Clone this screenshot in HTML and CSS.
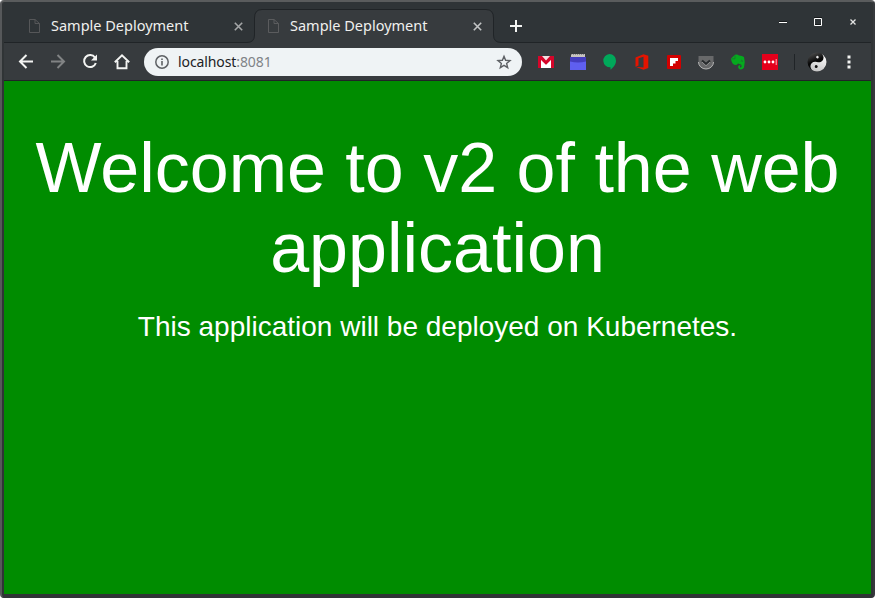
FILE: index.html
```html
<!DOCTYPE html>
<html lang="en">
<head>
<meta charset="utf-8">
<title>Sample Deployment</title>
<link rel="stylesheet" href="styles.css">
</head>
<body>
<div class="window">
  <header class="tabs">
    <svg class="tab-shape" width="867" height="41" viewBox="0 0 867 41"><path d="M0 40.5H243Q250.500 40.500 250.500 33V16Q250.500 7.500 258 7.500H482Q489.500 7.500 489.500 16V33Q489.500 40.500 497 40.500H867V42H0Z" fill="#373b3e" stroke="#202427"/></svg>
    <div class="tab">
      <svg class="page-icon" width="12" height="14" viewBox="0 0 12 14"><path d="M1.500.5H7L11.500 4.500V13.500H1.500ZM7 .5V4.500H11.500" fill="none" stroke="#565759"/></svg>
      <span class="tab-title">Sample Deployment</span>
      <svg class="close" width="9" height="9" viewBox="0 0 9 9"><path d="M.8.8 8.200 8.200M8.200.8.8 8.200" stroke="#a4a6a7" stroke-width="1.600"/></svg>
    </div>
    <div class="tab">
      <svg class="page-icon" width="12" height="14" viewBox="0 0 12 14"><path d="M1.500.5H7L11.500 4.500V13.500H1.500ZM7 .5V4.500H11.500" fill="none" stroke="#5b5c5e"/></svg>
      <span class="tab-title">Sample Deployment</span>
      <svg class="close" width="9" height="9" viewBox="0 0 9 9"><path d="M.8.8 8.200 8.200M8.200.8.8 8.200" stroke="#c2c4c5" stroke-width="1.600"/></svg>
    </div>
    <svg class="new-tab" width="12" height="12" viewBox="0 0 12 12"><path d="M6 0V12M0 6H12" stroke="#f3f4f2" stroke-width="2"/></svg>
    <div class="controls">
      <svg width="8" height="9" viewBox="0 0 8 9"><path d="M0 3.500H8" stroke="#16191b"/><path d="M0 4.500H8" stroke="#fff"/></svg>
      <svg width="8" height="9" viewBox="0 0 8 9"><path d="M.5 .5H7.500V7.500H.5Z" fill="none" stroke="#fff"/><path d="M0 -.5H8M1 6.500H7" stroke="#16191b"/></svg>
      <svg width="8" height="9" viewBox="0 0 8 9"><path d="M1.500 1.500 6.500 6.500M6.500 1.500 1.500 6.500" stroke="#e4e5e4" stroke-width="1.300"/></svg>
    </div>
  </header>
  <nav class="toolbar">
    <div class="nav">
      <svg width="16" height="16" viewBox="0 0 16 16"><path d="M15 7.500H2.500M8.500 1 2 7.500l6.500 6.500" fill="none" stroke="#f3f4f2" stroke-width="2"/></svg>
      <svg width="16" height="16" viewBox="0 0 16 16"><path d="M1 7.500H13.500M7.500 1 14 7.500l-6.500 6.500" fill="none" stroke="#818384" stroke-width="2"/></svg>
      <svg width="16" height="16" viewBox="0 0 16 16"><path d="M13 3.600A6 6 0 1 0 13.800 9" fill="none" stroke="#f3f4f2" stroke-width="2"/><path d="M15 .5V6.500H9Z" fill="#f3f4f2"/></svg>
      <svg width="16" height="16" viewBox="0 0 16 16"><path d="M.8 8.300 8 1.300l7.200 7M3.500 7V14.300H12.500V7" fill="none" stroke="#f3f4f2" stroke-width="1.900"/></svg>
    </div>
    <div class="address">
      <svg width="14" height="14" viewBox="0 0 14 14"><circle cx="7" cy="7" r="6.200" fill="none" stroke="#5e6165" stroke-width="1.500"/><path d="M7 6V10.500M7 3.500V5" stroke="#5e6165" stroke-width="1.600"/></svg>
      <span class="url">localhost<i>:8081</i></span>
      <svg class="star" width="14" height="14" viewBox="0 0 14 14"><path d="M7 1.300 8.600 5.300 13 5.600 9.600 8.400 10.700 12.700 7 10.300 3.300 12.700 4.400 8.400 1 5.600 5.400 5.300Z" fill="none" stroke="#5e6165" stroke-width="1.400"/></svg>
    </div>
    <div class="extensions">
      <svg width="16" height="16" viewBox="0 0 16 16"><path d="M0 2H16V14H0Z" fill="#d5062a"/><path d="M3 2H13V14H3Z" fill="#f3dfe1"/><path d="M1 2H4L8 6.500 12 2H15V4.500L8 11 1 4.500Z" fill="#d5062a"/><path d="M3 6 8 11 13 6V14H3Z" fill="#fff"/></svg>
      <svg width="16" height="16" viewBox="0 0 16 16"><path d="M0 3H16V16H0Z" fill="#5f5ff0"/><path d="M0 3H16V7.500Q8 9.500 0 7.500Z" fill="#443dbe"/><path d="M1 0H15V3H1Z" fill="#c6c3be"/><path d="M1 .5H15" stroke="#8b8b8b" stroke-dasharray="1 1"/></svg>
      <svg width="16" height="16" viewBox="0 0 16 16"><path d="M7.500 0a6.600 6.600 0 0 1 6.500 6.700c0 4-3 7-5.500 9V13.300A6.600 6.600 0 0 1 7.500 0Z" fill="#00a85a"/></svg>
      <svg width="16" height="16" viewBox="0 0 16 16"><path d="M1.500 3.500 9.500.3 14.300 1.700V14L9.500 15.700 1.500 12.700 9.500 13.500V2.800L4.500 4.200V11.500L1.500 12.700Z" fill="#e51400"/></svg>
      <svg width="16" height="16" viewBox="0 0 16 16"><rect x="1" y="1" width="14" height="14" rx="1" fill="#d20000"/><path d="M4 4H12V7H9.500V9.500H7V12H4Z" fill="#fff"/></svg>
      <svg width="16" height="16" viewBox="0 0 16 16"><path d="M.5 2H15.500V8A7.500 7 0 0 1 .5 8Z" fill="#68696a"/><path d="M.5 8A7.500 7 0 0 0 15.500 8" fill="none" stroke="#b5b5b5"/><path d="M4 6.500 8 10l4-3.500" fill="none" stroke="#282b2d" stroke-width="2.200"/><path d="M4 8 8 11.700 12 8" fill="none" stroke="#aaa" stroke-width=".7"/></svg>
      <svg width="16" height="16" viewBox="0 0 16 16"><path d="M1 4.500 5 .8Q7-.2 9 1.500Q12 1.400 14 3Q15.500 8 14 13.500Q12.500 16 9.500 15.300Q7.500 14 8.300 12Q9.500 10.500 11 12H10Q9.300 13.500 11 13.500Q12.500 12 11 10.500Q9 10 8 9.500Q7.500 11 5 11Q1.500 10 1 4.500Z" fill="#05a91e"/><path d="M1.500 4.800H5V1.500M11 6q1.500 0 1.700 1.500-1-.6-2-.2" fill="none" stroke="#1f6b30" stroke-width=".7"/></svg>
      <svg width="16" height="16" viewBox="0 0 16 16"><path d="M0 0H16V16H0Z" fill="#e4001b"/><circle cx="3" cy="8" r="1.400" fill="#fff"/><circle cx="7" cy="8" r="1.400" fill="#fff"/><circle cx="11" cy="8" r="1.400" fill="#fff"/><path d="M14.200 5V11" stroke="#ffc4ca" stroke-width=".9"/></svg>
    </div>
    <div class="divider"></div>
    <svg class="avatar" width="20" height="20" viewBox="0 0 20 20">
      <defs>
        <linearGradient id="dark" x2="1" y2="1"><stop stop-color="#666"/><stop offset=".45" stop-color="#080808"/></linearGradient>
        <linearGradient id="light" x2="0" y2="1"><stop stop-color="#fff"/><stop offset="1" stop-color="#c4c4c4"/></linearGradient>
      </defs>
      <g transform="rotate(22 10 10)">
        <circle cx="10" cy="10" r="9.500" fill="url(#dark)"/>
        <path d="M10 .5A9.500 9.500 0 0 1 10 19.500A4.750 4.750 0 0 1 10 10A4.750 4.750 0 0 0 10 .5Z" fill="url(#light)"/>
        <circle cx="8.600" cy="5.300" r="1.300" fill="#eee"/>
        <circle cx="11" cy="14.500" r="1.500" fill="#111"/>
      </g>
    </svg>
    <svg class="menu" width="4" height="14" viewBox="0 0 4 14"><path d="M.5 .5h3v3h-3zM.5 5.500h3v3h-3zM.5 10.500h3v3h-3z" fill="#f3f4f2"/></svg>
  </nav>
  <main>
    <h1>Welcome to v2 of the web application</h1>
    <p>This application will be deployed on Kubernetes.</p>
  </main>
</div>
</body>
</html>
```
FILE: styles.css
```css
* { box-sizing: border-box; }
body { margin: 0; background: #fff; }
svg { display: block; flex: none; overflow: visible; }
.window {
  height: 598px;
  padding: 0 2px;
  border: 2px solid;
  border-width: 2px 2px 1px;
  border-color: #5a5c5d #36393c #303436 #56585a;
  border-radius: 4px;
  background: #303436;
  overflow: hidden;
}
.tabs {
  position: relative;
  display: flex;
  height: 41px;
  background: #2f3437;
  font: 14.500px "Noto Sans", sans-serif;
  color: #f0f0ee;
}
.tab-shape { position: absolute; left: 0; top: 0; overflow: hidden; }
.tab {
  position: relative;
  display: flex;
  align-items: center;
  width: 239px;
  height: 41px;
  padding: 7px 0 0 24px;
}
.tab-title {
  width: 183px;
  margin-left: 11px;
  padding-bottom: 2px;
  white-space: nowrap;
  line-height: 20px;
}
.new-tab { position: relative; margin: 18px 0 0 28px; }
.controls { position: relative; display: flex; gap: 27px; margin: 16px 14px 0 auto; }
.toolbar {
  display: flex;
  align-items: center;
  height: 38px;
  padding-left: 14px;
  background: #373b3e;
  border-bottom: 1px solid #202427;
}
.nav { display: flex; gap: 16px; }
.address {
  display: flex;
  align-items: center;
  width: 378px;
  height: 28px;
  margin-left: 14px;
  padding: 0 11px;
  border-radius: 14px;
  background: #eff3f5;
}
.url {
  margin-left: 9px;
  font: 14px/20px "Noto Sans", sans-serif;
  letter-spacing: -0.1px;
  color: #202124;
}
.url i { font-style: normal; color: #808387; }
.star { margin-left: auto; }
.extensions { display: flex; gap: 16px; margin-left: 16px; }
.divider { width: 1px; height: 16px; margin-left: 16px; background: #202427; }
.avatar { margin-left: 12px; }
.menu { margin-left: 20px; }
main {
  height: 513px;
  padding-top: 47px;
  background: #008c00;
  color: #fff;
  text-align: center;
  font-family: "Liberation Sans", sans-serif;
}
h1 { margin: 0; font-size: 70px; line-height: 80px; font-weight: 400; }
p { margin: 23px 0 0; font-size: 28px; line-height: 32px; }
```
